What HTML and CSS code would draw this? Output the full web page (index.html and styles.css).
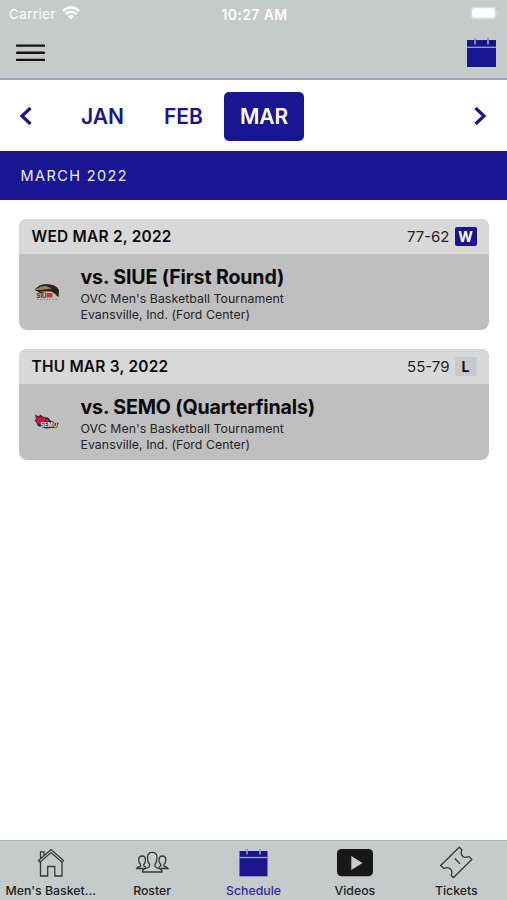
FILE: index.html
```html
<!DOCTYPE html>
<html lang="en">
<head>
  <meta charset="UTF-8" />
  <meta name="viewport" content="width=device-width, initial-scale=1.0" />
  <title>Men's Basketball Schedule</title>
  <link rel="stylesheet" href="styles.css">
</head>
<body>
  <header>
    <div class="status-bar">
      <div class="carrier">
        <span>Carrier</span>
        <svg class="wifi" viewBox="0 0 18 14">
          <path d="M1 5 Q9 -2.2 17 5" />
          <path d="M3.8 8 Q9 3.4 14.2 8" />
          <path class="dot" d="M5.9 10.2 Q9 7.6 12.1 10.2 L9 13.6 Z" />
        </svg>
      </div>
      <div class="clock">10:27 AM</div>
      <svg class="battery" viewBox="0 0 30 15">
        <rect x="0.5" y="0.5" width="26" height="13" rx="4" fill="#d6dada" />
        <rect x="2.3" y="2.3" width="22.4" height="9.4" rx="2.2" fill="#fff" />
        <path d="M28 5 Q30 7 28 9 Z" fill="#dfe2e2" />
      </svg>
    </div>
    <div class="nav-bar">
      <svg class="menu-icon" viewBox="0 0 29 18">
        <path d="M1 1.6 H28 M1 8.7 H28 M1 15.9 H28" />
      </svg>
      <svg class="calendar-icon" viewBox="0 0 29 30">
        <rect x="0" y="2" width="29" height="27" fill="#191593" />
        <path d="M0 9.3 H29" stroke="#a9abd0" stroke-width="1.2" />
        <path d="M8 0 V6.5 M21 0 V6.5" stroke="#8f94b8" stroke-width="1.8" />
      </svg>
    </div>
  </header>

  <div class="months">
    <svg class="arrow" viewBox="0 0 14 20"><path d="M11.5 2 L3 10 L11.5 18" /></svg>
    <div class="month-list">
      <a class="month">JAN</a>
      <a class="month">FEB</a>
      <a class="month active">MAR</a>
    </div>
    <svg class="arrow" viewBox="0 0 14 20"><path d="M2.5 2 L11 10 L2.5 18" /></svg>
  </div>

  <div class="month-title">MARCH 2022</div>

  <div class="games">
    <div class="game">
      <div class="game-header">
        <div class="date">WED MAR 2, 2022</div>
        <div class="score">77-62</div>
        <div class="result win">W</div>
      </div>
      <div class="game-body">
        <svg class="team-logo" viewBox="0 0 26 18">
          <path d="M0.5 7 Q5 1 12 1 Q22 1 25 7 L24.5 14 L20 11 L13 9.5 L6 10 Q3 8 0.5 7 Z" fill="#29231d" />
          <path d="M1 7 Q6 3 12 3 L18 5.5 L12 6.2 L5 7 Z" fill="#a2824a" />
          <path d="M6 8.5 H17 L23 12 L16 10.5 Z" fill="#d6cba9" />
          <text class="siue" x="2.5" y="14.5">SIU</text>
          <path d="M12.5 10 H18.5 V14.5 H12.5 Z" fill="#d92d42" />
          <path d="M3 16.4 H24" stroke="#8f8b88" stroke-width="1" stroke-dasharray="2 1" />
        </svg>
        <div class="info">
          <h2>vs. SIUE (First Round)</h2>
          <p>OVC Men's Basketball Tournament</p>
          <p>Evansville, Ind. (Ford Center)</p>
        </div>
      </div>
    </div>

    <div class="game">
      <div class="game-header">
        <div class="date">THU MAR 3, 2022</div>
        <div class="score">55-79</div>
        <div class="result">L</div>
      </div>
      <div class="game-body">
        <svg class="team-logo" viewBox="0 0 26 18">
          <path d="M1 1.5 L5 3.5 L6 1.5 L10 4 L14 4.5 L17 8 L24.5 10 L23 14.5 L12 15.5 L4 13 L2 9 L0.5 8 L2 6 Z" fill="#35282a" />
          <path d="M2.5 3.5 L6 5 L7 3.5 L12 5.5 L10 10 L5 11.5 L2 8 Z" fill="#ca1935" />
          <path d="M12 6 L15 7.5 L12 8.5 Z" fill="#d42640" />
          <text class="semo" x="6.5" y="14">SEMO</text>
        </svg>
        <div class="info">
          <h2>vs. SEMO (Quarterfinals)</h2>
          <p>OVC Men's Basketball Tournament</p>
          <p>Evansville, Ind. (Ford Center)</p>
        </div>
      </div>
    </div>
  </div>

  <nav class="tab-bar">
    <a class="tab">
      <svg viewBox="0 0 40 34">
        <path d="M7.5 15.5 L20 4.5 L32.5 15.5 L31 17.2 L20 7.5 L9 17.2 Z M9.5 13.2 V6.8 H13 V10.2 M9.5 17 V31 H16.7 V21.5 H23.8 V31 H31 V17" />
      </svg>
      <span>Men's Basket...</span>
    </a>
    <a class="tab">
      <svg viewBox="0 0 40 34">
        <path d="M17.5 21.5 V19.5 Q15.5 17 15.5 12.5 Q15.5 7.3 20.3 7.3 Q25 7.3 25 12.5 Q25 17 23 19.5 V21.5 Q24 23 27.5 23.5 Q30 24 30 27 H10.5 Q10.5 24 13 23.5 Q16.5 23 17.5 21.5 Z" />
        <path d="M11.5 23.5 H4.5 Q5 22 8.5 21.3 V19.5 Q6.7 17.5 6.7 15 Q6.7 11 10.2 11 Q13.5 11 13.5 15 Q13.5 18 11.8 19.5 V21 L14 22.5" />
        <path d="M29 23.5 H36 Q35.5 22 32 21.3 V19.5 Q33.8 17.5 33.8 15 Q33.8 11 30.4 11 Q27 11 27 15 Q27 18 28.7 19.5 V21 L26.5 22.5" />
      </svg>
      <span>Roster</span>
    </a>
    <a class="tab active">
      <svg viewBox="0 0 40 34">
        <rect x="6.5" y="6" width="28" height="25.3" fill="#1b1690" stroke="none" />
        <path d="M6.5 12.5 H34.5" stroke="#a3a6cc" />
        <path d="M14 4 V9.5 M27 4 V9.5" stroke="#9297bb" stroke-width="1.7" />
      </svg>
      <span>Schedule</span>
    </a>
    <a class="tab">
      <svg viewBox="0 0 40 34">
        <rect x="2" y="4" width="36" height="27.3" rx="4.5" fill="#171919" stroke="none" />
        <path d="M16.3 11 V25 L27.5 18 Z" fill="#c6caca" stroke="none" />
      </svg>
      <span>Videos</span>
    </a>
    <a class="tab">
      <svg viewBox="0 0 40 34">
        <path d="M4.7 20.5 L23.3 2.2 L26 4.8 Q24 8.5 26.5 11 Q29 13.5 33 11.5 L35.8 14.4 L17.5 32.5 L15.2 30.5 Q17 26.5 14.4 24 Q11.8 21.5 7.8 23.5 Z" />
        <path d="M18.8 13.5 L24 18.8" />
      </svg>
      <span>Tickets</span>
    </a>
  </nav>
</body>
</html>
```

FILE: styles.css
```css
* {
  box-sizing: border-box;
}

body {
  margin: 0;
  height: 900px;
  display: flex;
  flex-direction: column;
  font-family: Inter, "Liberation Sans", sans-serif;
  background-color: #fff;
  color: #0b0b0b;
}

header {
  height: 80px;
  background-color: #c5caca;
  border-bottom: 2px solid #a29fc4;
}

.status-bar {
  display: grid;
  grid-template-columns: 1fr auto 1fr;
  align-items: center;
  height: 28px;
  padding: 0 7px 0 9px;
  color: #fff;
  font-size: 13.5px;
}

.carrier {
  display: flex;
  align-items: center;
  gap: 6px;
  letter-spacing: 0.35px;
}

.wifi {
  width: 18px;
  height: 14px;
  margin-top: -2px;
  fill: none;
  stroke: #fff;
  stroke-width: 2.4;
}

.wifi .dot {
  fill: #fff;
  stroke: none;
}

.clock {
  font-size: 14px;
  font-weight: 600;
  letter-spacing: 0.38px;
}

.battery {
  width: 30px;
  height: 15px;
  margin-top: -2px;
  justify-self: end;
}

.nav-bar {
  display: flex;
  justify-content: space-between;
  align-items: center;
  height: 50px;
  padding: 0 11px 0 16px;
}

.menu-icon {
  width: 29px;
  height: 18px;
  stroke: #121515;
  stroke-width: 2.4;
  stroke-linecap: round;
}

.calendar-icon {
  width: 29px;
  height: 30px;
}

.months {
  display: flex;
  align-items: center;
  height: 71px;
  padding: 1px 20px 0 19px;
}

.arrow {
  width: 14px;
  height: 20px;
  fill: none;
  stroke: #191593;
  stroke-width: 3.2;
}

.month-list {
  display: flex;
  flex: 1;
  gap: 8px;
  padding-left: 32px;
}

.month {
  height: 49px;
  padding: 0 16px;
  line-height: 49px;
  border-radius: 5px;
  color: #191593;
  font-size: 21px;
  font-weight: 600;
  text-align: center;
}

.month.active {
  margin-left: -3px;
  background-color: #191593;
  color: #fff;
}

.month-title {
  height: 49px;
  padding-left: 20.5px;
  line-height: 50px;
  background-color: #191593;
  color: #eeeefa;
  font-size: 14.5px;
  letter-spacing: 1.4px;
}

.games {
  flex: 1;
  display: flex;
  flex-direction: column;
  gap: 18.5px;
  padding: 19px 18.5px 0 19px;
}

.game {
  height: 111px;
  border-radius: 8px;
  background-color: #bfbfbf;
  overflow: hidden;
}

.game-header {
  display: flex;
  align-items: center;
  height: 35px;
  padding: 0 12px 0 12.5px;
  background-color: #d8d8d8;
}

.date {
  flex: 1;
  font-size: 15.4px;
  font-weight: 600;
  letter-spacing: 0.26px;
}

.score {
  margin-right: 5px;
  color: #252525;
  font-size: 15px;
}

.result {
  width: 22px;
  height: 19px;
  line-height: 19px;
  border-radius: 2px;
  background-color: #c5caca;
  color: #111;
  font-size: 14px;
  font-weight: 700;
  text-align: center;
}

.result.win {
  background-color: #191593;
  color: #fff;
}

.game-body {
  display: flex;
  align-items: center;
  height: 76px;
  padding-left: 15px;
}

.team-logo {
  width: 26px;
  height: 18px;
}

.siue {
  font-size: 6px;
  font-weight: 700;
  fill: #39302f;
}

.semo {
  font-size: 5.6px;
  font-weight: 800;
  fill: #dedede;
}

.info {
  padding: 4px 0 0 20.5px;
}

h2 {
  margin: 0 0 2px;
  font-size: 19.6px;
  line-height: 24px;
  font-weight: 700;
  letter-spacing: -0.15px;
}

.info p {
  margin: 0;
  color: #242424;
  font-size: 12.3px;
  line-height: 16px;
  letter-spacing: 0.06px;
}

.tab-bar {
  display: grid;
  grid-template-columns: repeat(5, 1fr);
  height: 60px;
  background-color: #c5caca;
  border-top: 1px solid #b3b7b7;
}

.tab {
  display: flex;
  flex-direction: column;
  align-items: center;
  padding-top: 4px;
  color: #202323;
  font-size: 12.3px;
  font-weight: 500;
  line-height: 15px;
  white-space: nowrap;
}

.tab svg {
  width: 40px;
  height: 34px;
  margin-bottom: 4px;
  fill: none;
  stroke: #353939;
  stroke-width: 1.3;
}

.tab.active {
  color: #3327a8;
}
```
